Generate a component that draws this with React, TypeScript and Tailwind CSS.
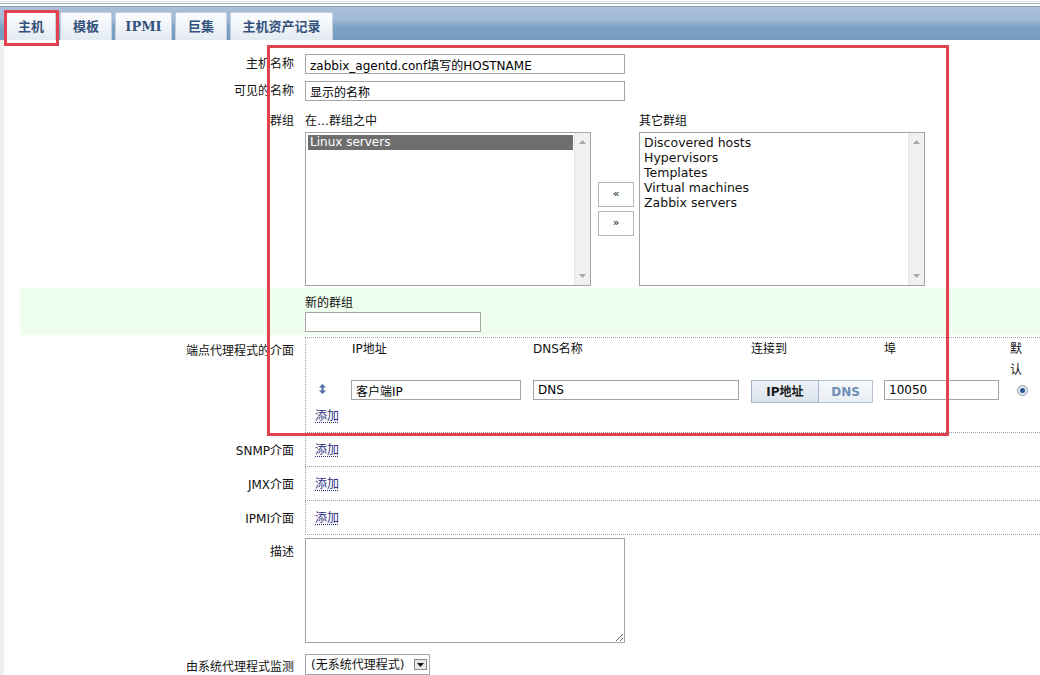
import React from "react";

const tabs = [
  { name: "主机", cls: "ml-[6px] w-[50px]" },
  { name: "模板", cls: "ml-[4px] w-[52px]" },
  { name: "IPMI", cls: "ml-[3px] w-[57px]" },
  { name: "巨集", cls: "ml-[3px] w-[52px]" },
  { name: "主机资产记录", cls: "ml-[3px] w-[103px]" },
];

const otherGroups = ["Discovered hosts", "Hypervisors", "Templates", "Virtual machines", "Zabbix servers"];

const Scrollbar = () => (
  <div className="w-[16px] shrink-0 bg-[#f0f0f0] border-l border-[#e4e4e4] flex flex-col justify-between items-center py-[7px]">
    <svg width="7" height="4" viewBox="0 0 7 4"><path d="M0 4 L3.5 0 L7 4 Z" fill="#a8a8a8" /></svg>
    <svg width="7" height="4" viewBox="0 0 7 4"><path d="M0 0 L3.5 4 L7 0 Z" fill="#a8a8a8" /></svg>
  </div>
);

const Input = ({ value, w }: { value: string; w: string }) => (
  <input
    readOnly
    value={value}
    className={`${w} h-[20px] border border-[#a5a5a5] bg-white px-[4px] text-[12px] text-black outline-none`}
  />
);

const AddLink = () => (
  <span className="text-[#2f2f7f] underline decoration-dotted underline-offset-2 cursor-pointer">添加</span>
);

const Label = ({ children, cls = "" }: { children: React.ReactNode; cls?: string }) => (
  <div className={`w-[285px] shrink-0 text-right pr-[11px] leading-[16px] ${cls}`}>{children}</div>
);

const EmptyIfaceRow = ({ label }: { label: string }) => (
  <div className="flex h-[34px]">
    <Label cls="self-center pt-[1px]">{label}</Label>
    <div className="flex-1 border-l border-b border-dotted border-[#9aa2b0] flex items-center pl-[9px]">
      <AddLink />
    </div>
  </div>
);

export default function App() {
  return (
    <div className="relative w-[1040px] h-[675px] overflow-hidden bg-white text-[12px] text-[#111] font-['DejaVu_Sans','Noto_Sans_CJK_SC',sans-serif]">
      {/* header */}
      <div className="h-[7px] bg-white flex flex-col">
        <div className="h-[1px] mt-[1px] bg-[#d5dde6]" />
        <div className="h-[1px] mt-[1px] bg-[#a3b2c4]" />
        <div className="h-[1px] mt-[2px] bg-[#8a9bb1]" />
      </div>
      <div className="h-[33px] flex items-end bg-[linear-gradient(to_bottom,#a9bfda_0%,#a3bad6_38%,#7aa0c3_62%,#759cc0_100%)]">
        {tabs.map((t) => (
          <div
            key={t.name}
            className={`${t.cls} h-[28px] flex items-center justify-center border border-b-0 border-[#c3d0df] rounded-t-[2px] bg-[linear-gradient(to_bottom,#fdfeff,#e3eaf2)] text-[13px] font-bold text-[#34527c] font-['DejaVu_Serif','Noto_Sans_CJK_SC',serif]`}
          >
            {t.name}
          </div>
        ))}
      </div>

      {/* form */}
      <div className="border-l-[4px] border-[#eeeeee] pl-[16px] pt-[12px]">
        <div className="flex items-center h-[24px]">
          <Label>主机名称</Label>
          <Input value="zabbix_agentd.conf填写的HOSTNAME" w="w-[320px]" />
        </div>
        <div className="flex items-center h-[24px] mt-[3px]">
          <Label>可见的名称</Label>
          <Input value="显示的名称" w="w-[320px]" />
        </div>

        {/* groups */}
        <div className="flex mt-[10px] pb-[2px]">
          <Label>群组</Label>
          <div className="flex">
            <div className="w-[286px]">
              <div className="leading-[16px]">在…群组之中</div>
              <div className="mt-[3px] h-[154px] border border-[#a5a5a5] flex">
                <div className="flex-1 pt-[2px] pl-[2px] pr-[1px]">
                  <div className="h-[15px] leading-[15px] bg-[#6e6e6e] text-white px-[2px]">Linux servers</div>
                </div>
                <Scrollbar />
              </div>
            </div>
            <div className="w-[48px] flex flex-col justify-center items-center gap-[4px] pt-[19px] pl-[2px]">
              <div className="w-[36px] h-[25px] border border-[#b5b5b5] bg-white flex items-center justify-center text-[11px]">«</div>
              <div className="w-[36px] h-[25px] border border-[#b5b5b5] bg-white flex items-center justify-center text-[11px]">»</div>
            </div>
            <div className="w-[286px]">
              <div className="leading-[16px]">其它群组</div>
              <div className="mt-[3px] h-[154px] border border-[#a5a5a5] flex">
                <div className="flex-1 pt-[2px] pl-[4px] leading-[15px] text-[12.5px]">
                  {otherGroups.map((g) => (
                    <div key={g}>{g}</div>
                  ))}
                </div>
                <Scrollbar />
              </div>
            </div>
          </div>
        </div>

        {/* new group */}
        <div className="flex bg-[#efffef] pt-[7px] pb-[3px]">
          <Label> </Label>
          <div>
            <div className="leading-[16px]">新的群组</div>
            <div className="mt-[1px]">
              <Input value="" w="w-[176px]" />
            </div>
          </div>
        </div>

        {/* agent interfaces */}
        <div className="flex">
          <Label cls="pt-[8px]">端点代理程式的介面</Label>
          <div className="flex-1 mt-[2px] border-t border-l border-b border-dotted border-[#9aa2b0] pt-[1px] pb-[8px]">
            <div className="flex h-[41px] leading-[21px]">
              <div className="w-[45px]" />
              <div className="w-[182px] pl-[1px]">IP地址</div>
              <div className="w-[218px]">DNS名称</div>
              <div className="w-[133px]">连接到</div>
              <div className="w-[126px]">埠</div>
              <div className="w-[14px] break-all">默认</div>
            </div>
            <div className="flex items-start h-[23px]">
              <div className="w-[45px] pl-[13px] pt-[4px]">
                <svg width="7" height="10" viewBox="0 0 7 10">
                  <path d="M3.5 0 L7 3.5 L4.5 3.5 L4.5 6.5 L7 6.5 L3.5 10 L0 6.5 L2.5 6.5 L2.5 3.5 L0 3.5 Z" fill="#4a6e9e" />
                </svg>
              </div>
              <div className="w-[182px]">
                <Input value="客户端IP" w="w-[170px]" />
              </div>
              <div className="w-[218px]">
                <Input value="DNS" w="w-[206px]" />
              </div>
              <div className="w-[133px] flex h-[23px]">
                <div className="w-[68px] border border-[#a4b5ca] bg-[linear-gradient(to_bottom,#eef2f7,#d9e2ec)] flex items-center justify-center font-bold text-[12px] text-[#1c1c1c]">
                  IP地址
                </div>
                <div className="w-[54px] border border-l-0 border-[#b4c2d3] bg-[linear-gradient(to_bottom,#f7f9fb,#e8edf3)] flex items-center justify-center font-bold text-[12px] text-[#6e8fb6]">
                  DNS
                </div>
              </div>
              <div className="w-[126px]">
                <Input value="10050" w="w-[115px]" />
              </div>
              <div className="w-[20px] pl-[7px] pt-[5px]">
                <div className="w-[11px] h-[11px] rounded-full border border-[#8b9bb0] bg-[#e3e9f0] flex items-center justify-center">
                  <div className="w-[5px] h-[5px] rounded-full bg-[#2e5b96]" />
                </div>
              </div>
            </div>
            <div className="mt-[5px] pl-[9px] leading-[16px]">
              <AddLink />
            </div>
          </div>
        </div>

        <EmptyIfaceRow label="SNMP介面" />
        <EmptyIfaceRow label="JMX介面" />
        <EmptyIfaceRow label="IPMI介面" />

        {/* description */}
        <div className="flex">
          <Label cls="pt-[9px]">描述</Label>
          <textarea readOnly className="mt-[3px] w-[320px] h-[105px] border border-[#a5a5a5] bg-white outline-none" />
        </div>

        {/* proxy */}
        <div className="flex mt-[11px]">
          <Label cls="pt-[5px]">由系统代理程式监测</Label>
          <div className="w-[125px] h-[21px] border border-[#a5a5a5] bg-white flex items-center pl-[5px]">
            <span className="flex-1 leading-[16px]">(无系统代理程式)</span>
            <div className="w-[13px] h-[11px] mr-[2px] border border-[#8a8a8a] bg-[#e8e8e8] flex items-center justify-center">
              <svg width="7" height="4" viewBox="0 0 7 4"><path d="M0 0 L3.5 4 L7 0 Z" fill="#111" /></svg>
            </div>
          </div>
        </div>
      </div>

      {/* annotation boxes */}
      <div className="absolute left-[4px] top-[10px] w-[55px] h-[36px] border-[3px] border-[#e2414f]" />
      <div className="absolute left-[267px] top-[45px] w-[682px] h-[391px] border-[3px] border-[#e2414f]" />
    </div>
  );
}
